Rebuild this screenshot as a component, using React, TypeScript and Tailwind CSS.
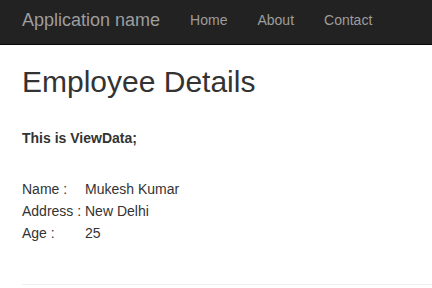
export default function App() {
  const font = { fontFamily: '"Liberation Sans", Arial, Helvetica, sans-serif' };
  return (
    <div className="min-h-[288px] bg-white text-[#333]" style={font}>
      <nav className="flex h-[45px] items-start border-b border-[#080808] bg-[#222] pt-[10px]">
        <a className="ml-[22px] mr-[15px] text-[18px] leading-[20px] text-[#9d9d9d]">Application name</a>
        <a className="px-[15px] text-[14px] leading-[20px] text-[#9d9d9d]">Home</a>
        <a className="px-[15px] text-[14px] leading-[20px] text-[#9d9d9d]">About</a>
        <a className="px-[15px] text-[14px] leading-[20px] text-[#9d9d9d]">Contact</a>
      </nav>
      <div className="pl-[22px]">
        <h2 className="mt-[20px] text-[30px] leading-[33px] font-normal">Employee Details</h2>
        <h5 className="mt-[30px] text-[14px] leading-[20px] font-bold">This is ViewData;</h5>
        <div className="mt-[30px] grid grid-cols-[63px_1fr] text-[14px] leading-[22px]">
          <div>Name :</div>
          <div>Mukesh Kumar</div>
          <div>Address :</div>
          <div>New Delhi</div>
          <div>Age :</div>
          <div>25</div>
        </div>
        <hr className="mt-[40px] border-0 border-t border-[#eee]" />
      </div>
    </div>
  );
}
